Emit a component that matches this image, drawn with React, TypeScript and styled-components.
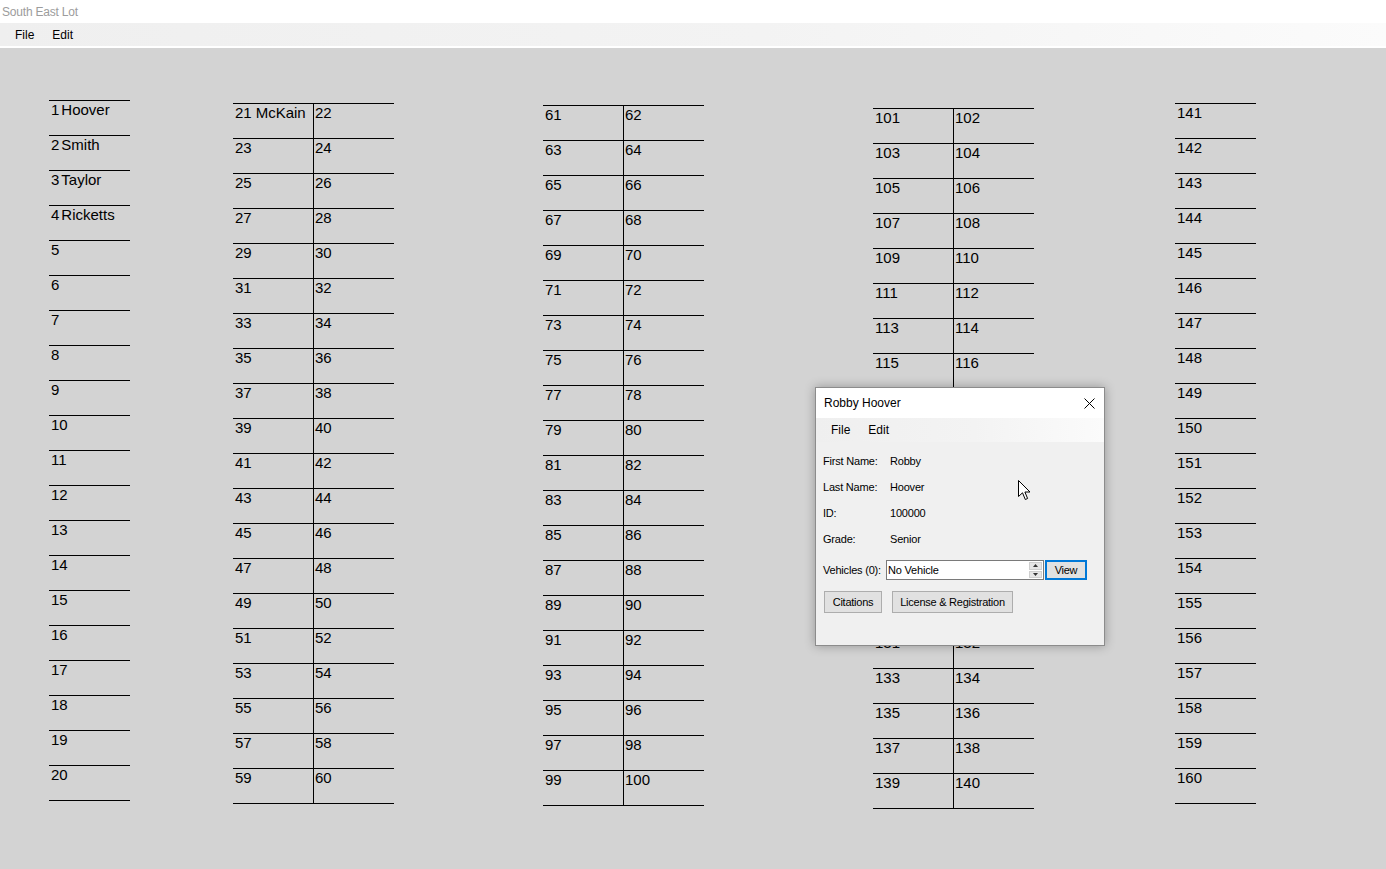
import styled, { createGlobalStyle } from "styled-components";

const GlobalStyle = createGlobalStyle`
  html, body {
    margin: 0;
    padding: 0;
  }

  body {
    background: #d3d3d3;
    font-family: "Liberation Sans", Arial, sans-serif;
  }
`;

const Window = styled.div`
  position: relative;
  width: 1386px;
  height: 869px;
  display: flex;
  flex-direction: column;
  overflow: hidden;
  background: #d3d3d3;
`;

const TitleBar = styled.div`
  height: 23px;
  display: flex;
  align-items: center;
  padding-left: 2px;
  background: #ffffff;
  color: #9c9c9c;
  font-size: 12px;
  letter-spacing: -0.2px;
`;

const MenuBar = styled.nav<{ $pad: number; $gap: number; $height: number }>`
  height: ${(p) => p.$height}px;
  display: flex;
  align-items: center;
  gap: ${(p) => p.$gap}px;
  padding-left: ${(p) => p.$pad}px;
  background: linear-gradient(to right, #efefef 0%, #f3f3f3 55%, #fbfbfb 100%);
  font-size: 12px;
  color: #000;
`;

const MainMenu = styled(MenuBar)`
  border-bottom: 2px solid #ffffff;
`;

const Lot = styled.main`
  flex: 1;
  display: flex;
  align-items: flex-start;
`;

const Column = styled.div<{ $left: number; $top: number }>`
  margin-left: ${(p) => p.$left}px;
  margin-top: ${(p) => p.$top}px;
  display: flex;
  flex-direction: column;
  border-bottom: 1px solid #000;
`;

const Row = styled.div<{ $double?: boolean }>`
  box-sizing: border-box;
  height: 35px;
  display: grid;
  grid-template-columns: ${(p) => (p.$double ? "80px 81px" : "81px")};
  border-top: 1px solid #000;
`;

const Spot = styled.div`
  padding-left: 2px;
  font-size: 15px;
  line-height: 17px;
  color: #000;
  white-space: nowrap;

  & + & {
    border-left: 1px solid #000;
    padding-left: 1px;
  }
`;

const Owner = styled.span<{ $tight?: boolean }>`
  margin-left: ${(p) => (p.$tight ? 2 : 4)}px;
`;

/* student popup window */
const Dialog = styled.section`
  position: absolute;
  left: 815px;
  top: 387px;
  width: 290px;
  height: 259px;
  box-sizing: border-box;
  display: flex;
  flex-direction: column;
  border: 1px solid #8c8c8c;
  background: #f0f0f0;
  box-shadow: 0 0 10px rgba(0, 0, 0, 0.3);
`;

const DialogTitle = styled.header`
  height: 30px;
  display: flex;
  align-items: center;
  justify-content: space-between;
  padding: 0 9px 0 8px;
  background: #fff;
  font-size: 12px;
  color: #000;
`;

const CloseIcon = styled.svg`
  width: 11px;
  height: 11px;
`;

const DialogBody = styled.div`
  flex: 1;
  display: flex;
  flex-direction: column;
  padding: 6px 0 0 7px;
  font-size: 11px;
  color: #000;
`;

const Field = styled.div`
  height: 26px;
  display: grid;
  grid-template-columns: 67px 1fr;
  align-items: center;
  letter-spacing: -0.2px;
`;

const VehicleRow = styled.div`
  margin-top: 8px;
  display: flex;
  align-items: center;
  height: 20px;
`;

const VehicleLabel = styled.span`
  width: 63px;
  letter-spacing: -0.2px;
`;

const Combo = styled.div`
  box-sizing: border-box;
  width: 158px;
  height: 20px;
  display: flex;
  border: 1px solid #7a7a7a;
  background: #fff;
`;

const ComboText = styled.span`
  flex: 1;
  padding-left: 1px;
  line-height: 18px;
  letter-spacing: -0.2px;
`;

const Spinner = styled.div`
  width: 13px;
  display: flex;
  flex-direction: column;
  gap: 1px;
  padding: 1px 1px 1px 0;
`;

const SpinButton = styled.div`
  flex: 1;
  display: flex;
  align-items: center;
  justify-content: center;
  background: #e6e6e6;
  border: 1px solid #cfcfcf;
`;

const Button = styled.button<{ $width: number; $focused?: boolean }>`
  box-sizing: border-box;
  width: ${(p) => p.$width}px;
  height: ${(p) => (p.$focused ? 20 : 22)}px;
  margin-left: ${(p) => (p.$focused ? 1 : 0)}px;
  padding: 0;
  border: ${(p) => (p.$focused ? "2px solid #0078d7" : "1px solid #adadad")};
  background: #e1e1e1;
  font-family: inherit;
  font-size: 11px;
  color: #000;
  letter-spacing: -0.25px;
`;

const ButtonRow = styled.div`
  margin-top: 11px;
  padding-left: 1px;
  display: flex;
  gap: 10px;
`;

const Cursor = styled.svg`
  position: absolute;
  left: 1018px;
  top: 480px;
  width: 13px;
  height: 21px;
`;

const owners: Record<number, string> = {
  1: "Hoover",
  2: "Smith",
  3: "Taylor",
  4: "Ricketts",
  21: "McKain",
};

type Block = { first: number; double: boolean; left: number; top: number };

const blocks: Block[] = [
  { first: 1, double: false, left: 49, top: 52 },
  { first: 21, double: true, left: 103, top: 55 },
  { first: 61, double: true, left: 149, top: 57 },
  { first: 101, double: true, left: 169, top: 60 },
  { first: 141, double: false, left: 141, top: 55 },
];

const SpotCell = ({ n, tight }: { n: number; tight?: boolean }) => (
  <Spot>
    {n}
    {owners[n] && <Owner $tight={tight}>{owners[n]}</Owner>}
  </Spot>
);

const SpotColumn = ({ first, double, left, top }: Block) => {
  const rows = Array.from({ length: 20 }, (_, i) => (double ? first + i * 2 : first + i));
  return (
    <Column $left={left} $top={top}>
      {rows.map((n) => (
        <Row key={n} $double={double}>
          <SpotCell n={n} tight={!double} />
          {double && <SpotCell n={n + 1} />}
        </Row>
      ))}
    </Column>
  );
};

const Arrow = ({ up }: { up?: boolean }) => (
  <svg width="5" height="3" viewBox="0 0 5 3">
    <path d={up ? "M0 3 L2.5 0 L5 3 Z" : "M0 0 L2.5 3 L5 0 Z"} fill="#333" />
  </svg>
);

const StudentDialog = () => (
  <Dialog>
    <DialogTitle>
      <span>Robby Hoover</span>
      <CloseIcon viewBox="0 0 11 11">
        <path d="M0.5 0.5 L10.5 10.5 M10.5 0.5 L0.5 10.5" stroke="#000" strokeWidth="1" />
      </CloseIcon>
    </DialogTitle>
    <MenuBar $pad={15} $gap={18} $height={24}>
      <span>File</span>
      <span>Edit</span>
    </MenuBar>
    <DialogBody>
      <Field>
        <span>First Name:</span>
        <span>Robby</span>
      </Field>
      <Field>
        <span>Last Name:</span>
        <span>Hoover</span>
      </Field>
      <Field>
        <span>ID:</span>
        <span>100000</span>
      </Field>
      <Field>
        <span>Grade:</span>
        <span>Senior</span>
      </Field>
      <VehicleRow>
        <VehicleLabel>Vehicles (0):</VehicleLabel>
        <Combo>
          <ComboText>No Vehicle</ComboText>
          <Spinner>
            <SpinButton>
              <Arrow up />
            </SpinButton>
            <SpinButton>
              <Arrow />
            </SpinButton>
          </Spinner>
        </Combo>
        <Button $width={42} $focused>
          View
        </Button>
      </VehicleRow>
      <ButtonRow>
        <Button $width={58}>Citations</Button>
        <Button $width={121}>License &amp; Registration</Button>
      </ButtonRow>
    </DialogBody>
  </Dialog>
);

export default function App() {
  return (
    <>
      <GlobalStyle />
      <Window>
        <TitleBar>South East Lot</TitleBar>
        <MainMenu $pad={15} $gap={18} $height={23}>
          <span>File</span>
          <span>Edit</span>
        </MainMenu>
        <Lot>
          {blocks.map((b) => (
            <SpotColumn key={b.first} {...b} />
          ))}
        </Lot>
        <StudentDialog />
        <Cursor viewBox="0 0 13 21">
          <path
            d="M0.5 0.5 L0.5 16.5 L4.5 12.8 L7.3 19.5 L9.6 18.5 L6.9 12 L12 12 Z"
            fill="#fff"
            stroke="#000"
            strokeWidth="1"
            strokeLinejoin="round"
          />
        </Cursor>
      </Window>
    </>
  );
}
